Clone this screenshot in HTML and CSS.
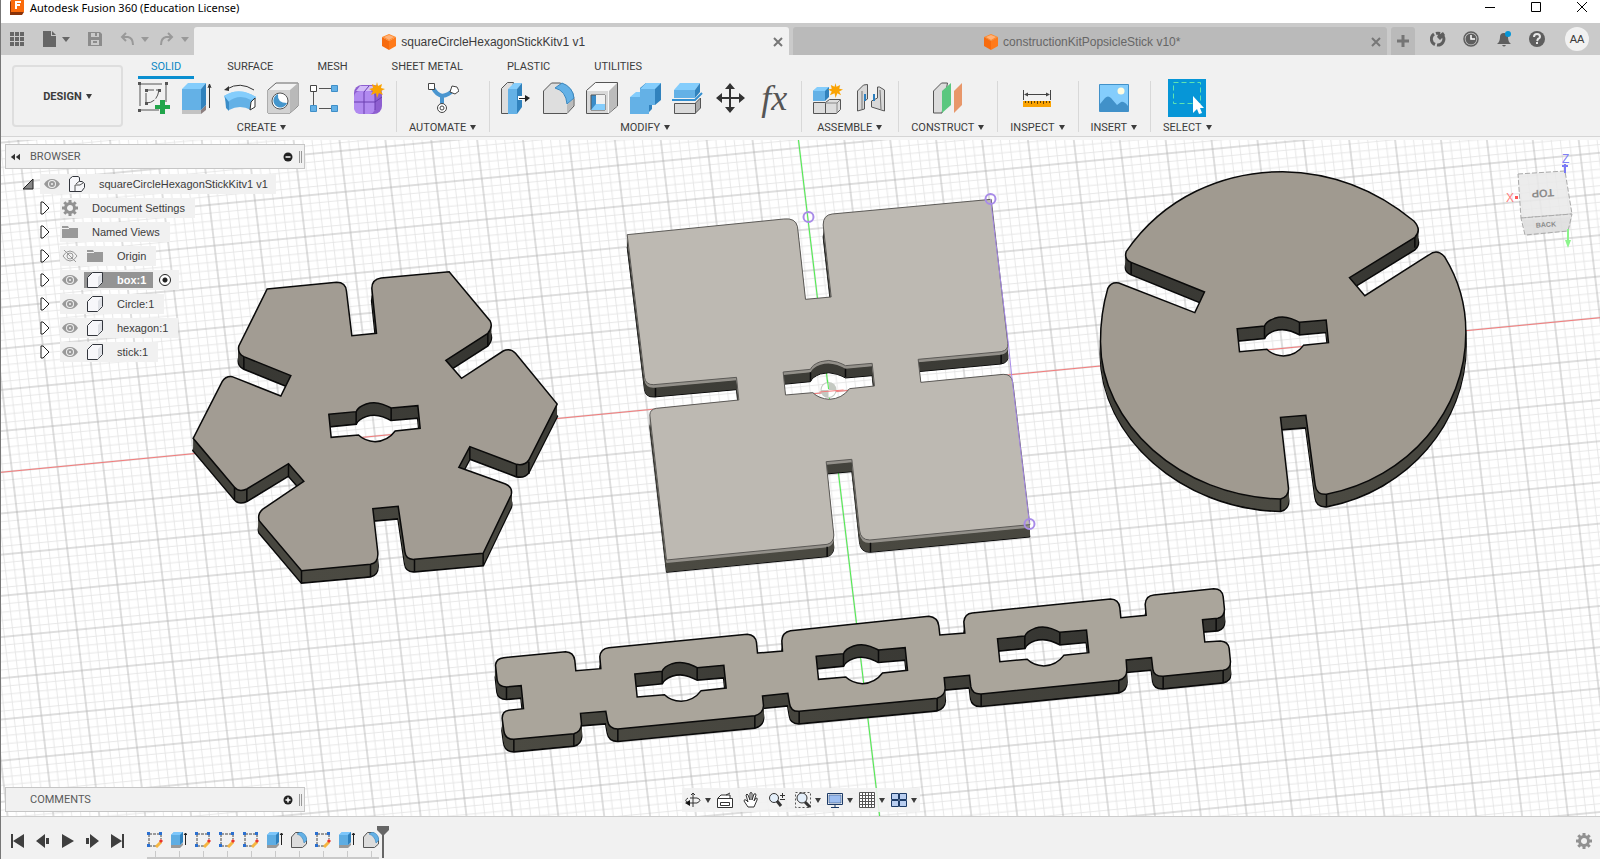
FILE: index.html
```html
<!DOCTYPE html>
<html lang="en">

<head>
    <meta charset="UTF-8">
    <meta name="viewport" content="width=device-width, initial-scale=1.0">
    <title>Autodesk Fusion 360 (Education License)</title>
    <link rel="stylesheet" href="styles.css">
</head>

<body>
    <!-- Shared icons -->
    <svg class="sprite" aria-hidden="true">
        <symbol id="cube" viewBox="0 0 16 16">
            <path fill="#ff8a2b" d="M8 0l7 3-7 4-7-4z" /><path fill="#f76b0e" d="M1 3l7 4v9l-7-4z" /><path fill="#ff7a1a" d="M15 3L8 7v9l7-4z" /><path fill="#ffb27a" d="M8 1l5 2-5 3-5-3z" />
        </symbol>
        <symbol id="eye" viewBox="0 0 16 16">
            <path fill="#999" d="M0 8Q3 3 8 3t8 5q-3 5-8 5T0 8z" /><circle cx="8" cy="8" r="4" fill="#f1f1f1" /><circle cx="8" cy="8" r="3" fill="#999" /><circle cx="8" cy="8" r="1" fill="#f1f1f1" />
        </symbol>
        <symbol id="eye-off" viewBox="0 0 16 16">
            <path fill="none" stroke="#999" d="M1 8q3-5 7-5t7 5q-3 5-7 5T1 8zM2 2l12 12" /><circle cx="8" cy="8" r="3" fill="none" stroke="#999" />
        </symbol>
        <symbol id="folder" viewBox="0 0 16 16"><path fill="#999" d="M0 2h6l1 2h9v10H0z" /><path stroke="#f1f1f1" d="M0 4.500h7" /></symbol>
        <symbol id="gear" viewBox="0 0 16 16">
            <circle cx="8" cy="8" r="4.500" fill="none" stroke="#919191" stroke-width="3" />
            <path stroke="#919191" stroke-width="3" d="M8 0v3M8 13v3M0 8h3M13 8h3M2.300 2.300l2 2M11.700 11.700l2 2M2.300 13.700l2-2M11.700 4.300l2-2" />
        </symbol>
        <symbol id="body" viewBox="0 0 16 16"><path fill="#f7f7fa" stroke="#33363d" d="M.500 5.500l5-5h10v10l-5 5H.500z" /><path fill="#dfe1e6" d="M11 5l4-4v9l-4 5z" /></symbol>
        <symbol id="assembly" viewBox="0 0 16 16"><path fill="#f7f7fa" stroke="#33363d" d="M.500 3l3-2.500H9l1.500 1v4H13l2.500 2v4l-3 4H.500z" /><path fill="none" stroke="#555" d="M6 9v6M6 9h5l3-2M10.500 5L7 8" /></symbol>
        <symbol id="closed" viewBox="0 0 10 14"><path fill="#fff" stroke="#222" d="M1 1v12h2l6-6-6-6z" /></symbol>
        <symbol id="sketch" viewBox="0 0 16 16">
            <path fill="none" stroke="#444" stroke-dasharray="3 1" d="M2 2h12v5M2 2v12h7" /><path fill="#2a6fd0" d="M0 0h3v3H0zM12 0h3v3h-3zM0 12h3v3H0z" /><path stroke="#f5b642" stroke-width="3" d="M9 15l5-5" /><path stroke="#e8352c" stroke-width="3" d="M13 10l2-2" />
        </symbol>
        <symbol id="extrude-s" viewBox="0 0 16 16">
            <path fill="#999" d="M0 13h9l3-2v2l-3 3H0z" /><path fill="#5eade3" d="M0 3l3-3h9v10l-3 3H0z" /><path fill="#7cc6fb" d="M0 3l3-3h9L9 3z" /><path fill="#2e80bd" d="M9 3l3-3v10l-3 3z" /><path stroke="#222" d="M14.500 13V1M13 3l1.500-2L16 3" />
        </symbol>
        <symbol id="fillet-s" viewBox="0 0 16 16">
            <path fill="#dcdcdc" stroke="#555" d="M.500 15.500V5l4-4.500h5Q15 3 15.500 9v3l-4 3.500z" /><path fill="#64b1e6" stroke="#2c78b0" stroke-width=".5" d="M6 2l3-2q6 1 7 8l-3 3Q12 4 6 2z" />
        </symbol>
        <symbol id="burst" viewBox="0 0 16 16"><path fill="#faa302" d="M8 0l1 4 4-2-1 4 4 1-4 2 2 4-4-2-2 5-1-5-5 2 2-4-4-2 4-1-1-4 4 2z" /></symbol>
    </svg>

    <!-- Title bar -->
    <header class="titlebar">
        <svg class="app-logo" viewBox="0 0 14 16"><path fill="#fa6b0c" d="M1 0h13v12H1z" /><path fill="#8a3208" d="M0 2l1-2v12h13l-2 3H0z" /><path fill="none" stroke="#fff" stroke-width="2" d="M6 9V2h5M6 5h4" /></svg>
        <h1>Autodesk Fusion 360 (Education License)</h1>
        <div class="window-controls">
            <button aria-label="Minimize"><svg viewBox="0 0 12 12"><path d="M1 6.500h10" /></svg></button>
            <button aria-label="Maximize"><svg viewBox="0 0 12 12"><path d="M1.500 1.500h9v9h-9z" /></svg></button>
            <button aria-label="Close"><svg viewBox="0 0 12 12"><path d="M1 1l10 10M11 1L1 11" /></svg></button>
        </div>
    </header>

    <!-- Document tabs -->
    <nav class="docbar">
        <div class="quick">
            <button aria-label="Data panel"><svg class="i14" viewBox="0 0 14 14"><path fill="#666" d="M0 0h4v4H0zM5 0h4v4H5zM10 0h4v4h-4zM0 5h4v4H0zM5 5h4v4H5zM10 5h4v4h-4zM0 10h4v4H0zM5 10h4v4H5zM10 10h4v4h-4z" /></svg></button>
            <button class="drop" aria-label="File"><svg class="i16" viewBox="0 0 16 16"><path fill="#666" d="M1 0h8v5h5v11H1zM10 0l4 4h-4z" /></svg></button>
            <button aria-label="Save"><svg class="i14" viewBox="0 0 14 14"><path fill="#8c8c8c" fill-rule="evenodd" d="M0 0h12l2 2v12H0zM3 1v4h8V1zM3 8v5h8V8z" /><path stroke="#8c8c8c" stroke-width="2" d="M8 1v3M5 10h4" /></svg></button>
            <button class="drop faded" aria-label="Undo"><svg class="i14" viewBox="0 0 14 14"><path fill="none" stroke="#999" stroke-width="2" d="M2 5h6q5 1 5 8" /><path fill="none" stroke="#999" stroke-width="2" d="M6 1L2 5l4 4" /></svg></button>
            <button class="drop faded" aria-label="Redo"><svg class="i14" viewBox="0 0 14 14"><path fill="none" stroke="#999" stroke-width="2" d="M12 5H6q-5 1-5 8" /><path fill="none" stroke="#999" stroke-width="2" d="M8 1l4 4-4 4" /></svg></button>
        </div>
        <div class="doc active">
            <a href="#"><svg class="i16"><use href="#cube" /></svg>squareCircleHexagonStickKitv1 v1</a>
            <button aria-label="Close tab"><svg viewBox="0 0 10 10"><path d="M1 1l8 8M9 1L1 9" /></svg></button>
        </div>
        <div class="doc">
            <a href="#"><svg class="i16"><use href="#cube" /></svg>constructionKitPopsicleStick v10*</a>
            <button aria-label="Close tab"><svg viewBox="0 0 10 10"><path d="M1 1l8 8M9 1L1 9" /></svg></button>
        </div>
        <button class="new-doc" aria-label="New design"><svg class="i14" viewBox="0 0 14 14"><path stroke="#757575" stroke-width="3" d="M7 1v12M1 7h12" /></svg></button>
        <div class="account">
            <button aria-label="Extensions"><svg class="i16" viewBox="0 0 16 16"><path fill="none" stroke="#5e5e5e" stroke-width="3" d="M4 3a6 6 0 0 0 1 10.500M7 14a6 6 0 0 0 6-9M6 2.500a6 6 0 0 1 4 0" /><path fill="#5e5e5e" d="M7 6l3 3 5-5-2-3-3 2-1-1z" /></svg></button>
            <button aria-label="Job status"><svg class="i16" viewBox="0 0 16 16"><circle cx="8" cy="8" r="7" fill="none" stroke="#5e5e5e" stroke-width="1.500" /><circle cx="8" cy="8" r="5.500" fill="#5e5e5e" /><path fill="none" stroke="#fff" stroke-width="1.500" d="M8 4v4h4" /></svg></button>
            <button aria-label="Notifications"><svg class="i16" viewBox="0 0 16 16"><path fill="#5e5e5e" d="M1 13q3-2 3-7 0-4 4-4t4 4q0 5 3 7zM6 14h4q-2 3-4 0z" /><circle cx="12" cy="3" r="3" fill="#0696d7" /></svg></button>
            <button aria-label="Help"><svg class="i16" viewBox="0 0 16 16"><circle cx="8" cy="8" r="8" fill="#5e5e5e" /><path fill="none" stroke="#e8e8e8" stroke-width="2" d="M5 6q0-3 3-3t3 3q0 1-2 2l-1 2M8 11v2" /></svg></button>
            <button class="avatar">AA</button>
        </div>
    </nav>

    <!-- Ribbon -->
    <section class="ribbon">
        <button class="workspace drop">DESIGN</button>
        <div class="tools">
            <nav class="tabs">
                <a class="active" href="#">SOLID</a>
                <a href="#">SURFACE</a>
                <a href="#">MESH</a>
                <a href="#">SHEET METAL</a>
                <a href="#">PLASTIC</a>
                <a href="#">UTILITIES</a>
            </nav>
            <div class="groups">
                <div class="group">
                    <div class="icons">
                        <button aria-label="Create Sketch"><svg viewBox="0 0 32 32"><path fill="none" stroke="#555" d="M2 2h26v18M2 2v26h19" stroke-dasharray="22 3" /><path fill="none" stroke="#555" d="M8 20V8h13M8 21q11 0 13-13" stroke-dasharray="9 2" /><path fill="#555" d="M0 0h3v3H0zM27 0h3v3h-3zM0 27h3v3H0zM7 7h3v3H7zM20 7h3v3h-3zM7 20h3v3H7z" /><path fill="#21a54a" d="M22 18h5v5h5v4h-5v5h-5v-5h-5v-4h5z" /></svg></button>
                        <button aria-label="Extrude"><svg viewBox="0 0 32 32"><path fill="#c3c3c3" d="M1 28h19v4H1z" /><path fill="#8e8080" d="M20 28l5-5v5l-5 4z" /><path fill="#64b1e6" d="M1 7h19v21H1z" /><path fill="#84cdfc" d="M1 7l6-6h18l-5 6z" /><path fill="#3182bd" d="M20 7l5-6v22l-5 5z" /><path fill="none" stroke="#333" d="M28.500 26V3M27 6l1.500-4L30 6" /></svg></button>
                        <button aria-label="Revolve"><svg viewBox="0 0 32 32"><path fill="#64b1e6" d="M0 14q15-9 32 1l-5 13q-11-6-22 0z" /><path fill="#84cdfc" d="M0 14q15-10 32 1l-5 3q-12-7-23 2z" /><path fill="#3b8dc8" d="M1 15l4 5v9l-3-3z" /><path fill="#fff" stroke="#333" d="M31 16l-4 4-1 8 5-3z" /><path fill="none" stroke="#333" d="M30 8Q16-1 3 7" /><path fill="#333" d="M0 8l5-4v5z" /></svg></button>
                        <button aria-label="Hole"><svg viewBox="0 0 32 32"><path fill="#f3f3f3" stroke="#666" d="M1 8l8-7h22v23l-8 7H1z" /><path fill="#d2d2d2" d="M1 8h22v23H1z" /><path fill="#b9b9b9" d="M23 8l8-7v23l-8 7z" /><circle cx="13" cy="19" r="8" fill="#fff" stroke="#555" /><path fill="#4596cc" d="M11 12a7 7 0 1 0 9 9q-10 0-9-9z" /></svg></button>
                        <button aria-label="Pattern"><svg viewBox="0 0 32 32"><path stroke="#555" d="M9 6.500h12M3.500 10v16M9 26.500h12" /><path fill="#fff" stroke="#444" d="M.500 3.500h6v6h-6z" /><path fill="#64b1e6" stroke="#3f8fc8" d="M21.500 3.500h6v6h-6zM.500 23.500h6v6h-6zM21.500 23.500h6v6h-6z" /></svg></button>
                        <button aria-label="Create Form"><svg viewBox="0 0 32 32"><rect x="1" y="3" width="28" height="29" rx="8" fill="#8e5fd0" /><rect x="1" y="9" width="21" height="23" rx="6" fill="#b18af0" /><path fill="#d3bcf8" d="M7 4h15l-4 5H3z" /><path fill="none" stroke="#6a3fb0" d="M11 10v22M1 20h21l7-5M11 10l5-6M22 12v16" /><use href="#burst" x="16" y="0" width="16" height="16" /></svg></button>
                    </div>
                    <button class="label drop">CREATE</button>
                </div>
                <div class="group">
                    <div class="icons">
                        <button aria-label="Automated Modeling"><svg viewBox="0 0 32 32"><path fill="none" stroke="#4a96d0" stroke-width="4" d="M6 6q3 6 9 8 7-1 11-6M15 14v10" /><path fill="#fff" stroke="#444" d="M1.500 1.500h6v6h-6zM25 4l5 1 2 4-4 3-5-2z" /><circle cx="15" cy="26" r="4.500" fill="#fff" stroke="#444" /><circle cx="15" cy="26" r="2" fill="none" stroke="#444" /></svg></button>
                    </div>
                    <button class="label drop">AUTOMATE</button>
                </div>
                <div class="group">
                    <div class="icons">
                        <button aria-label="Press Pull"><svg viewBox="0 0 32 32"><path fill="#dedede" stroke="#555" d="M1.500 31.500v-25l6-6h6l-5 31z" /><path fill="#64b1e6" d="M8 7h9v25H8z" /><path fill="#84cdfc" d="M8 7l6-6h8l-5 6z" /><path fill="#3182bd" d="M17 7l5-6v24l-5 7z" /><path stroke="#fff" stroke-width="4" d="M18 16h6" /><path stroke="#222" d="M19 16.500h7" /><path fill="#222" d="M25 13l5 3-5 4z" /></svg></button>
                        <button aria-label="Fillet"><svg viewBox="0 0 32 32"><path fill="#dedede" stroke="#555" d="M.500 31.500V9l8-8H17q13 4 14 16v7l-7 7.500z" /><path fill="#bbb" d="M24 23l6-6v7l-6 7z" /><path fill="#64b1e6" stroke="#3a88c0" d="M12 6l7-5q11 4 12 15l-7 6Q23 9 12 6z" /></svg></button>
                        <button aria-label="Shell"><svg viewBox="0 0 32 32"><path fill="#f8f8f8" stroke="#555" d="M.500 8.500l9-8h22V24l-9 7.500H.500z" /><path fill="#d9d9d9" d="M1 9h21v22H1z" /><path fill="#bcbcbc" d="M23 9l8-8v23l-8 7z" /><path fill="#3a8cc8" stroke="#555" d="M5 13h14v15H5z" /><path fill="#f1f1f1" d="M10 13h9v9h-9z" /><path fill="#84cdfc" d="M5 28l5-6h9v6z" /></svg></button>
                        <button aria-label="Combine"><svg viewBox="0 0 32 32"><path fill="#3182bd" d="M1 16l6-5h4V6l6-5h15v17l-6 5h-3v4l-5 5H1z" /><path fill="#64b1e6" d="M1 15h10V7h15v16h-6v9H1z" /><path fill="#84cdfc" d="M11 7l6-6h15l-6 6zM1 15l6-5h4v5z" /></svg></button>
                        <button aria-label="Split Body"><svg viewBox="0 0 32 32"><path fill="#64b1e6" d="M2 8h21v8H2z" /><path fill="#84cdfc" d="M2 8l6-7h20l-5 7z" /><path fill="#3182bd" d="M23 8l5-7v9l-5 6z" /><path fill="none" stroke="#338fd0" stroke-width="2" d="M0 18h23l7-7" /><path fill="#dadada" stroke="#555" d="M2.500 21.500h21v10h-21z" /><path fill="#aaa" stroke="#555" d="M23.500 21l5-5v10l-5 5z" /></svg></button>
                        <button aria-label="Move"><svg viewBox="0 0 32 32"><path stroke="#333" stroke-width="2" d="M15 5v22M4 16h22" /><path fill="#333" d="M15 1l5 6H10zM15 31l5-6H10zM1 16l6-5v10zM30 16l-6-5v10z" /></svg></button>
                        <button class="fx" aria-label="Change Parameters"><i>fx</i></button>
                    </div>
                    <button class="label drop">MODIFY</button>
                </div>
                <div class="group">
                    <div class="icons">
                        <button aria-label="New Component"><svg viewBox="0 0 32 32"><path fill="#3182bd" d="M1 9l5-4h11v10l-4 4H1z" /><path fill="#64b1e6" d="M1 9h12v10H1z" /><path fill="#84cdfc" d="M1 9l4-4h12l-4 4z" /><path fill="#ddd" stroke="#555" d="M1.500 20.500h12v11h-12zM13.500 20.500l4-3h11v10l-4 4h-11z" /><path fill="none" stroke="#888" d="M13 21h12v10M25 21l3-3" /><use href="#burst" x="16" y="1" width="15" height="15" /></svg></button>
                        <button aria-label="Joint"><svg viewBox="0 0 32 32"><path fill="#d8d8d8" stroke="#555" d="M2.500 29V9l6-6 4-.500V17l-3 2v8zM29.500 29V8l-5-3h-2v11l-6 3v6z" /><path fill="none" stroke="#777" d="M7 9v18M25 8l1 19" /><path stroke="#2c80c0" stroke-width="2" d="M10 12v7M19 12v7" /></svg></button>
                    </div>
                    <button class="label drop">ASSEMBLE</button>
                </div>
                <div class="group">
                    <div class="icons">
                        <button aria-label="Offset Plane"><svg viewBox="0 0 32 32"><path fill="#dcdcdc" stroke="#555" d="M1.500 31V9l8-8h6L10 31z" /><path fill="#5bc77f" d="M10 9l9-8v22l-9 8z" /><path fill="#e8976a" d="M22 9l8-8v22l-8 8z" /></svg></button>
                    </div>
                    <button class="label drop">CONSTRUCT</button>
                </div>
                <div class="group">
                    <div class="icons">
                        <button aria-label="Measure"><svg viewBox="0 0 32 32"><path stroke="#444" d="M2.500 8v10M29.500 8v10M4 12.500h24" /><path fill="#444" d="M3 12.500l4-2v4zM29 12.500l-4-2v4z" /><path fill="#faa302" d="M2 19h28v6H2z" /><path stroke="#664200" d="M4.500 19v2M7.500 19v2M10.500 19v3M13.500 19v2M16.500 19v3M19.500 19v2M22.500 19v3M25.500 19v2M28.500 19v2" /></svg></button>
                    </div>
                    <button class="label drop">INSPECT</button>
                </div>
                <div class="group">
                    <div class="icons">
                        <button aria-label="Insert Image"><svg viewBox="0 0 32 32"><path fill="#84cdfc" stroke="#4191c9" d="M1.500 2.500h29v27h-29z" /><path fill="#4191c9" d="M2 22l5-6q3-3 6 0l6 7 4-3q3-1 7 4v6H2z" /><circle cx="23" cy="9" r="3.500" fill="#fffce0" /></svg></button>
                    </div>
                    <button class="label drop">INSERT</button>
                </div>
                <div class="group">
                    <div class="icons">
                        <button class="selected" aria-label="Select"><svg viewBox="0 0 38 38"><path fill="none" stroke="#5fe3b0" stroke-dasharray="5 3" d="M5.500 3.500h27v21h-27z" /><path fill="#fff" d="M25 17v17l4-4 2 5 3-1-2-5h4z" /></svg></button>
                    </div>
                    <button class="label drop">SELECT</button>
                </div>
            </div>
        </div>
    </section>

    <!-- Modeling canvas -->
    <main class="stage">
        <svg class="scene" viewBox="0 137 1600 679" preserveAspectRatio="xMidYMid slice">
            <defs>
                <!-- ten units are one small grid cell, sheared into the view plane -->
                <pattern id="grid" width="50" height="50" patternUnits="userSpaceOnUse" patternTransform="matrix(.9074 -.0878 .0978 .8146 828.200 392.200)">
                    <path class="minor" d="M10 0v50M20 0v50M30 0v50M40 0v50M0 10h50M0 20h50M0 30h50M0 40h50" />
                    <path class="major" d="M0 0v50M50 0v50M0 0h50M0 50h50" />
                </pattern>
                <linearGradient id="wall" x1="0" x2="0" y1="0" y2="1">
                    <stop offset="0" stop-color="#30302d" />
                    <stop offset="1" stop-color="#4b4a42" />
                </linearGradient>
            </defs>
            <rect x="-400" y="-263" width="2400" height="1480" fill="url(#grid)" />
            <path class="axis-x" d="M-400 511L2000 279" />
            <path class="axis-y" d="M762 -160L929 1232" />
            <circle cx="828" cy="390" r="8" fill="#c4c9c2" />
            <path fill="#fff" d="M828 390h7a7 7 0 0 1-7 7zM828 390h-7a7 7 0 0 1 7-7z" />
            <path class="axis-x" d="M819 392l24-2" /><path class="axis-y" d="M827 380l1 9" />

            <!-- hexagon -->
            <g class="part" fill="#a29c93" data-depth="37" transform="translate(180 250) scale(.33333)">
                <path d="M260 117L468 97Q496 97 498 124L514 257L588 250L574 115Q574 88 602 84L806 65L929 213Q938 230 922 250L796 331L843 385L968 303Q990 293 1005 310L1130 462L1045 630Q1033 648 1008 643L868 590L835 652L975 702Q998 712 992 735L908 910L702 928Q676 930 673 905L653 769L577 776L592 908Q594 938 570 943L363 962L236 812Q230 793 246 778L370 694L324 641L199 717Q175 728 162 712L38 565L125 395Q135 378 155 380L301 438L331 377L190 320Q170 310 175 288z
                    M445 493l82-8q5-14 30-23q25-8 50 1q17 6 25 11l80-7l7 68l-75 8q-22 30-60 32q-32-2-50-20l-82 7z" />
                <path class="edge" d="M190 320v37M162 712v37M199 717v37M363 962v37M570 943v37M702 928v37M908 910v37M1008 643v37M1045 635v37M868 590v37M324 641v37M922 250v37M527 485v37M632 474v37" />
            </g>

            <!-- box -->
            <g class="part box" fill="#bdb9b2" data-depth="37" data-rim="9" transform="translate(610 180) scale(.33333)">
                <path d="M50 164L520 117Q555 113 561 140L585 358L662 351L638 135Q638 105 665 102L1142 58L1192 490Q1195 510 1172 515L923 538L931 607L1178 583Q1204 582 1207 608L1258 1034L778 1080Q750 1080 747 1050L724 838L647 845L670 1065Q670 1088 650 1093L168 1140L118 705Q118 688 138 685L385 660L378 592L130 614Q105 615 102 592z
                    M518 576l82-8q5-14 30-23q25-8 50 1q17 6 25 11l80-7l7 68l-75 8q-22 30-60 32q-32-2-50-20l-82 7z" />
                <path class="edge" d="M135 624v28M650 1100v30M780 1088v28M1172 524v28M600 577v25M705 566v25" />
            </g>
            <g class="picked">
                <path d="M990 199L1008 345L1011 374L1029 524" />
                <circle cx="808" cy="217" r="5" /><circle cx="990" cy="199" r="5" /><circle cx="1029" cy="524" r="5" />
            </g>

            <!-- circle -->
            <g class="part" fill="#a09a90" data-depth="37" transform="translate(1080 160) scale(.33333)">
                <path d="M137 275C250 110 430 35 607 35C770 38 900 100 1000 183Q1025 210 1003 232L807 353L853 407L1045 285Q1070 265 1092 290C1135 360 1157 440 1156 520C1156 750 985 955 738 1003Q708 1005 704 975L676 766L600 772L624 985Q625 1010 600 1017C300 1010 60 790 60 545Q60 460 82 385Q92 365 115 369L343 458L372 396L152 307Q130 298 137 275z
                    M470 506l82-8q5-14 30-23q25-8 50 1q17 6 25 11l80-7l7 68l-75 8q-22 30-60 32q-32-2-50-20l-82 7z" />
                <path class="edge" d="M152 307v37M600 1017v37M738 1003v37M1003 226v37M552 498v37M657 487v37" />
            </g>

            <!-- stick -->
            <g class="part" fill="#aaa59b" data-depth="37" transform="translate(480 570) scale(.33333)">
                <path d="M45 285Q47 265 70 263L255 245Q280 246 283 272L286 302L361 296L358 260Q360 236 385 233L800 193Q825 195 828 218L831 249L906 243L904 212Q905 187 930 182L1345 139Q1372 142 1375 168L1378 195L1453 189L1450 155Q1453 131 1475 129L1890 87Q1915 88 1918 113L1921 143L1997 136L1994 103Q1996 77 2020 75L2200 56Q2225 56 2228 80L2232 118Q2232 140 2212 145L2166 149L2173 216L2220 213Q2243 215 2246 235L2250 275Q2250 297 2228 301L2048 319Q2020 320 2017 297L2013 263L1937 270L1939 300Q1939 325 1915 331L1502 372Q1475 373 1471 350L1467 316L1391 323L1394 355Q1393 378 1370 385L956 424Q930 425 927 400L922 370L846 378L849 407Q848 430 823 437L412 477Q385 477 381 452L376 424L300 430L303 462Q302 485 280 491L100 508Q73 508 70 482L65 445Q65 424 85 421L129 416L122 347L78 351Q53 350 50 330z
                    M463 312l82-8q5-14 30-23q25-8 50 1q17 6 25 11l80-7l7 68l-75 8q-22 30-60 32q-32-2-50-20l-82 7z
                    M1007 259l82-8q5-14 30-23q25-8 50 1q17 6 25 11l80-7l7 68l-75 8q-22 30-60 32q-32-2-50-20l-82 7z
                    M1551 206l82-8q5-14 30-23q25-8 50 1q17 6 25 11l80-7l7 68l-75 8q-22 30-60 32q-32-2-50-20l-82 7z" />
                <path class="edge" d="M78 351v37M100 508v37M280 491v37M412 477v37M823 437v37M956 424v37M1370 385v37M1502 372v37M1915 331v37M2048 319v37M2228 301v37M2207 145v37M545 304v37M650 293v37M1089 251v37M1194 240v37M1633 198v37M1738 187v37" />
            </g>
        </svg>

        <!-- Browser tree -->
        <section class="panel browser">
            <header class="panel-head">
                <button aria-label="Collapse"><svg viewBox="0 0 12 10"><path fill="#333" d="M6 1v8L1 5zM12 1v8L7 5z" /></svg></button>
                <h2>BROWSER</h2>
                <button aria-label="Hide"><svg viewBox="0 0 10 10"><circle cx="5" cy="5" r="4.500" fill="#222" /><path stroke="#fff" stroke-width="1.500" d="M2.500 5h5" /></svg></button>
                <span class="grip"></span>
            </header>
            <ul class="tree">
                <li class="root"><svg class="arrow" viewBox="0 0 12 12"><path fill="#888" stroke="#222" d="M11 1v10H1z" /></svg><span class="node"><svg class="i16"><use href="#eye" /></svg><svg class="i16"><use href="#assembly" /></svg><span>squareCircleHexagonStickKitv1 v1</span></span></li>
                <li><svg class="arrow"><use href="#closed" /></svg><span class="node"><svg class="i16"><use href="#gear" /></svg><span>Document Settings</span></span></li>
                <li><svg class="arrow"><use href="#closed" /></svg><span class="node"><svg class="i16"><use href="#folder" /></svg><span>Named Views</span></span></li>
                <li><svg class="arrow"><use href="#closed" /></svg><span class="node"><svg class="i16"><use href="#eye-off" /></svg><svg class="i16"><use href="#folder" /></svg><span>Origin</span></span></li>
                <li><svg class="arrow"><use href="#closed" /></svg><span class="node current"><svg class="i16"><use href="#eye" /></svg><span class="name"><svg class="i16"><use href="#body" /></svg><span>box:1</span></span><input type="radio" checked aria-label="Activate box:1"></span></li>
                <li><svg class="arrow"><use href="#closed" /></svg><span class="node"><svg class="i16"><use href="#eye" /></svg><svg class="i16"><use href="#body" /></svg><span>Circle:1</span></span></li>
                <li><svg class="arrow"><use href="#closed" /></svg><span class="node"><svg class="i16"><use href="#eye" /></svg><svg class="i16"><use href="#body" /></svg><span>hexagon:1</span></span></li>
                <li><svg class="arrow"><use href="#closed" /></svg><span class="node"><svg class="i16"><use href="#eye" /></svg><svg class="i16"><use href="#body" /></svg><span>stick:1</span></span></li>
            </ul>
        </section>

        <!-- View cube -->
        <svg class="viewcube" viewBox="0 -4 80 104">
            <path fill="#9a9a9a" opacity=".3" d="M17 65l49-3-3 14-42 5z" />
            <path fill="#e9e9e9" fill-opacity=".85" stroke="#aaa" stroke-dasharray="5 2" d="M12 19l47-3 7 43-51 4z" />
            <path fill="#e0e0e0" fill-opacity=".85" stroke="#aaa" stroke-dasharray="5 2" d="M15 63l51-4-4 17-43 4z" />
            <text x="-34" y="-37" transform="rotate(176)" fill="#8c8c8c" font-size="11" font-weight="bold" text-anchor="middle">TOP</text>
            <text x="40" y="72" transform="rotate(-4 40 70)" fill="#8c8c8c" font-size="7" font-weight="bold" text-anchor="middle">BACK</text>
            <text x="0" y="47" fill="#ff8080" font-size="12">X</text>
            <path fill="#f55" d="M9 41h3v3H9z" />
            <text x="56" y="8" fill="#8080f5" font-size="12">Z</text>
            <path stroke="#7a7af5" stroke-width="2" d="M59 9v9M56 11h6" />
            <path stroke="#8cf58c" stroke-width="2" d="M62 74v16" /><path fill="#8cf58c" d="M59 85h6l-3 8z" />
        </svg>

        <!-- Comments -->
        <section class="panel comments">
            <header class="panel-head">
                <h2>COMMENTS</h2>
                <button aria-label="Add comment"><svg viewBox="0 0 10 10"><circle cx="5" cy="5" r="4.500" fill="#222" /><path stroke="#fff" stroke-width="1.500" d="M2.500 5h5M5 2.500v5" /></svg></button>
                <span class="grip"></span>
            </header>
        </section>

        <!-- Navigation bar -->
        <div class="navbar">
            <button class="drop" aria-label="Orbit"><svg class="i16" viewBox="0 0 16 16"><path fill="none" stroke="#333" d="M8 1v14M6 3l2-2 2 2M3 6q-5 3 1 5h8q6-3 0-5H5" /><path fill="#111" d="M0 11l5-3v6z" /></svg></button>
            <button aria-label="Look at"><svg class="i16" viewBox="0 0 16 16"><path fill="#fff" stroke="#333" d="M.500 6.500h15v9H.500zM3.500 10.500h9v3h-9zM1 6l3-3h9v3M9 3l4-2" /></svg></button>
            <button aria-label="Pan"><svg class="i16" viewBox="0 0 16 16"><path fill="#fff" stroke="#333" d="M5 15L1 9q0-2 2-1l2 2-2-7q1-2 2 0l2 5V1q1-1 2 0v7l2-6q2-1 2 1l-2 6 2-3q2 0 1 2l-3 7z" /></svg></button>
            <button aria-label="Zoom"><svg class="i16" viewBox="0 0 16 16"><circle cx="5" cy="6" r="4.500" fill="#e4effa" stroke="#333" /><path stroke="#333" stroke-width="3" d="M8 9l4 5" /><path stroke="#333" d="M11 3.500h5M13.500 1v5M11 7.500h5" /></svg></button>
            <button class="drop" aria-label="Fit"><svg class="i16" viewBox="0 0 16 16"><path fill="none" stroke="#555" stroke-dasharray="2 2" d="M.500.500h15v15H.500z" /><circle cx="7" cy="6" r="5" fill="#e4effa" stroke="#333" /><path stroke="#333" stroke-width="3" d="M10 10l5 5" /></svg></button>
            <button class="drop" aria-label="Display Settings"><svg class="i16" viewBox="0 0 16 16"><path fill="#eef3fa" stroke="#1c3a66" d="M.500 1.500h15v11H.500zM4 15.500h8M8 12v3" /><path fill="#9cbdf0" stroke="#1c3a66" stroke-width=".5" d="M2 3h12v8H2z" /></svg></button>
            <button class="drop" aria-label="Grid and Snaps"><svg class="i16" viewBox="0 0 16 16"><path fill="#fff" stroke="#555" d="M.500.500h15v15H.500zM3.500 0v16M6.500 0v16M9.500 0v16M12.500 0v16M0 3.500h16M0 6.500h16M0 9.500h16M0 12.500h16" /></svg></button>
            <button class="drop" aria-label="Viewports"><svg class="i16" viewBox="0 0 16 16"><path fill="#b9cef0" stroke="#1c3a66" d="M.500 1.500h7v6h-7zM8.500 1.500h7v6h-7zM.500 8.500h7v6h-7zM8.500 8.500h7v6h-7z" /></svg></button>
        </div>
    </main>

    <!-- Timeline -->
    <footer class="timeline">
        <div class="playback">
            <button aria-label="Go to start"><svg viewBox="0 0 13 14"><path d="M0 0h2v14H0zM13 0v14L2 7z" /></svg></button>
            <button aria-label="Step back"><svg viewBox="0 0 13 14"><path d="M9 0v14L0 7zM10 4h3v6h-3z" /></svg></button>
            <button aria-label="Play"><svg viewBox="0 0 13 14"><path d="M1 0v14l12-7z" /></svg></button>
            <button aria-label="Step forward"><svg viewBox="0 0 13 14"><path d="M4 0v14l9-7zM0 4h3v6H0z" /></svg></button>
            <button aria-label="Go to end"><svg viewBox="0 0 13 14"><path d="M11 0h2v14h-2zM0 0v14l11-7z" /></svg></button>
        </div>
        <div class="history">
            <button aria-label="Sketch1"><svg class="i16"><use href="#sketch" /></svg></button>
            <button aria-label="Extrude1"><svg class="i16"><use href="#extrude-s" /></svg></button>
            <button aria-label="Sketch2"><svg class="i16"><use href="#sketch" /></svg></button>
            <button aria-label="Sketch3"><svg class="i16"><use href="#sketch" /></svg></button>
            <button aria-label="Sketch4"><svg class="i16"><use href="#sketch" /></svg></button>
            <button aria-label="Extrude2"><svg class="i16"><use href="#extrude-s" /></svg></button>
            <button aria-label="Fillet1"><svg class="i16"><use href="#fillet-s" /></svg></button>
            <button aria-label="Sketch5"><svg class="i16"><use href="#sketch" /></svg></button>
            <button aria-label="Extrude3"><svg class="i16"><use href="#extrude-s" /></svg></button>
            <button aria-label="Fillet2"><svg class="i16"><use href="#fillet-s" /></svg></button>
            <svg class="marker" viewBox="0 0 12 32"><path fill="#666" d="M0 0h12v4L7 9v23H5V9L0 4z" /></svg>
        </div>
        <button class="settings" aria-label="Timeline settings"><svg class="i16"><use href="#gear" /></svg></button>
    </footer>

    <script>
        // Extrude each part downwards: stack copies of its face, deepest first
        document.querySelectorAll('.part').forEach(part => {
            const face = part.querySelector('path');
            const depth = Number(part.dataset.depth);
            const rim = Number(part.dataset.rim || 0);
            for (let dy = depth; dy > 0; dy -= 2) {
                const layer = face.cloneNode();
                layer.setAttribute('transform', `translate(0 ${dy})`);
                layer.setAttribute('class', dy === depth ? 'base' : dy <= rim ? 'rim' : 'wall');
                part.insertBefore(layer, face);
            }
            // vertical edges sit behind the face
            part.insertBefore(part.querySelector('.edge'), face);
            face.setAttribute('class', 'face');
        });
    </script>
</body>

</html>
```
FILE: styles.css
```css
* {
    box-sizing: border-box;
}

body {
    display: flex;
    flex-direction: column;
    height: 100vh;
    margin: 0;
    overflow: hidden;
    border-left: 1px solid #777;
    background: #f1f1f1;
    color: #3c3c3c;
    font-family: "Liberation Sans", Arial, sans-serif;
    font-size: 11px;
}

button {
    display: flex;
    align-items: center;
    justify-content: center;
    padding: 0;
    border: none;
    background: none;
    color: inherit;
    font: inherit;
}

a {
    color: inherit;
    text-decoration: none;
}

h1,
h2 {
    margin: 0;
    font-weight: normal;
}

svg {
    display: block;
    flex: none;
}

.sprite {
    position: absolute;
    width: 0;
    height: 0;
}

.i14 {
    width: 14px;
    height: 14px;
}

.i16 {
    width: 16px;
    height: 16px;
}

/* small triangle after drop-down buttons */
.drop::after {
    content: "";
    margin-left: 4px;
    border: 3px solid transparent;
    border-top: 5px solid #3c3c3c;
    border-bottom: 0;
}

/* Title bar */
.titlebar {
    display: flex;
    align-items: flex-start;
    height: 23px;
    background: #fff;
    color: #000;
}

.app-logo {
    width: 14px;
    height: 16px;
    margin-left: 9px;
}

.titlebar h1 {
    flex: 1;
    margin-left: 6px;
    font-family: "Noto Sans", "Open Sans", sans-serif;
    font-size: 11px;
    line-height: 16px;
}

.window-controls {
    display: flex;
    gap: 34px;
    padding: 1px 12px 0 0;
}

.window-controls svg {
    width: 12px;
    height: 12px;
    fill: none;
    stroke: #000;
}

/* Document tabs */
.docbar {
    display: flex;
    align-items: flex-end;
    height: 32px;
    background: #cacaca;
}

.quick {
    display: flex;
    align-items: center;
    gap: 18px;
    width: 193px;
    height: 32px;
    padding-left: 9px;
}

.quick .drop::after {
    border-top-color: #666;
    border-width: 5px 4px 0;
}

.quick .faded::after {
    margin-left: 7px;
    border-top-color: #999;
}

.quick .faded + .faded {
    margin-left: -7px;
}

.doc {
    display: flex;
    flex: 1;
    align-items: center;
    height: 28px;
    margin-right: 4px;
    padding: 1px 6px 0 0;
    border-radius: 3px 3px 0 0;
    background: #bababa;
    color: #666;
    font-size: 12px;
}

.doc.active {
    background: #f1f1f1;
    color: #3c3c3c;
}

.doc a {
    display: flex;
    flex: 1;
    align-items: center;
    justify-content: center;
    gap: 4px;
}

.doc button svg {
    width: 10px;
    height: 10px;
    stroke: #777;
    stroke-width: 2;
}

.new-doc {
    width: 24px;
    height: 28px;
    border-radius: 3px 3px 0 0;
    background: #bababa;
}

.account {
    display: flex;
    align-items: center;
    gap: 17px;
    height: 32px;
    padding: 0 11px 0 15px;
}

.avatar {
    width: 24px;
    height: 24px;
    margin-left: 3px;
    border-radius: 50%;
    background: #f1f1f1;
}

/* Ribbon */
.ribbon {
    position: relative;
    z-index: 1;
    display: flex;
    height: 82px;
    border-bottom: 1px solid #d5d5d5;
    background: #f1f1f1;
    box-shadow: 0 3px #f6f6f6;
    font-family: Roboto, sans-serif;
}

.workspace {
    width: 111px;
    height: 62px;
    margin: 10px 4px 0 11px;
    border: 2px solid #dedede;
    border-radius: 4px;
    font-weight: bold;
}

.tabs {
    display: flex;
    height: 24px;
}

.tabs a {
    position: relative;
    padding: 0 22px;
    line-height: 24px;
}

.tabs .active {
    padding: 0 24px;
    color: #0a87c4;
}

.tabs .active::after {
    content: "";
    position: absolute;
    right: 11px;
    bottom: 0;
    left: 11px;
    height: 3px;
    background: #0a8fd0;
}

.groups {
    display: flex;
}

.group {
    position: relative;
    display: flex;
    flex-direction: column;
    align-items: center;
    padding: 0 11px;
}

.group + .group::before {
    content: "";
    position: absolute;
    top: 2px;
    left: 0;
    width: 1px;
    height: 51px;
    background: #d8d8d8;
}

.icons {
    display: flex;
    align-items: center;
    gap: 11px;
    height: 38px;
}

.icons svg {
    width: 32px;
    height: 32px;
}

.icons .selected {
    background: #0696d7;
}

.icons .selected svg {
    width: 38px;
    height: 38px;
}

.fx {
    width: 32px;
    height: 32px;
    color: #555;
    font-family: "Liberation Serif", serif;
    font-size: 36px;
    line-height: 32px;
}

.label {
    height: 20px;
    padding: 0 2px;
}

/* Canvas */
.stage {
    position: relative;
    flex: 1;
    min-height: 0;
    background: #fff;
}

.scene {
    position: absolute;
    width: 100%;
    height: 100%;
}

.minor {
    fill: none;
    stroke: #e4e4e4;
}

.major {
    fill: none;
    stroke: #b4b4b4;
}

.axis-x {
    stroke: #f57c7c;
}

.axis-y {
    stroke: #4cf04c;
}

.part path {
    fill-rule: evenodd;
    vector-effect: non-scaling-stroke;
}

.part .face,
.part .base,
.part .edge {
    stroke: #0a0a0a;
    stroke-width: 1.5;
}

.part .base {
    stroke-width: 2;
}

.part .base,
.part .wall {
    fill: url(#wall);
}

.part .rim {
    fill: #94918b;
}

.part.box .base,
.part.box .face {
    stroke-width: 1;
}

.part.box .face {
    stroke: #5c5a57;
}

.picked {
    fill: none;
    stroke: #a88be8;
}

.picked circle {
    stroke-width: 2;
}

.viewcube {
    position: absolute;
    top: 14px;
    right: 14px;
    width: 80px;
    height: 104px;
}

/* Panels */
.panel {
    position: absolute;
    left: 4px;
    width: 300px;
}

.browser {
    top: 7px;
}

.comments {
    bottom: 4px;
}

.panel-head {
    display: flex;
    align-items: center;
    height: 25px;
    padding: 0 2px 0 4px;
    border: 1px solid #c6c6c6;
    background: #f1f1f1;
    color: #5a5a5a;
    font-family: Roboto, sans-serif;
}

.panel-head svg {
    width: 10px;
    height: 10px;
}

.panel-head h2 {
    flex: 1;
    margin-left: 10px;
    font-size: 11px;
}

.comments h2 {
    margin-left: 20px;
}

.grip {
    width: 3px;
    height: 12px;
    margin-left: 6px;
    border: 1px solid #999;
    border-width: 0 1px;
}

.tree {
    margin: 3px 0 0;
    padding: 0;
    list-style: none;
}

.tree li {
    display: flex;
    align-items: center;
    height: 24px;
    padding-left: 35px;
}

.tree .root {
    padding-left: 17px;
}

.arrow {
    width: 10px;
    height: 14px;
    margin-right: 10px;
}

.root .arrow {
    width: 12px;
    margin-right: 6px;
}

.node {
    display: flex;
    align-items: center;
    gap: 9px;
    height: 20px;
    padding: 0 10px 0 2px;
    background: #f1f1f1;
}

.root .node {
    padding: 0 8px 0 4px;
}

.node > span,
.name > span {
    margin-left: 5px;
}

.current {
    gap: 6px;
    padding-right: 8px;
}

.current .name {
    display: flex;
    align-items: center;
    gap: 9px;
    height: 16px;
    margin-left: 0;
    padding: 0 7px 0 3px;
    background: #949494;
    color: #fff;
    font-weight: bold;
}

.current input {
    width: 12px;
    height: 12px;
    margin: 0;
    border: 1px solid #222;
    border-radius: 50%;
    background: radial-gradient(#222 2px, #fff 3px);
    appearance: none;
}

/* Navigation bar */
.navbar {
    position: absolute;
    right: 0;
    bottom: 4px;
    left: 0;
    display: flex;
    gap: 10px;
    width: fit-content;
    margin: 0 auto;
    padding: 4px 3px;
    background: rgba(241, 241, 241, .9);
}

.navbar .drop {
    margin-right: -4px;
}

.navbar .drop:last-child {
    margin-right: 0;
}

.navbar .drop::after {
    margin-left: 4px;
}

/* Timeline */
.timeline {
    display: flex;
    align-items: flex-start;
    height: 43px;
    border-top: 1px solid #cdcdcd;
}

.playback {
    display: flex;
    gap: 12px;
    padding: 17px 0 0 10px;
}

.playback svg {
    width: 13px;
    height: 14px;
    fill: #3f3f3f;
}

.history {
    position: relative;
    display: flex;
    margin-left: 23px;
    border-bottom: 2px solid #c9c9c9;
}

.history button {
    align-items: flex-start;
    width: 24px;
    height: 40px;
    padding: 15px 8px 0 0;
    background: linear-gradient(#c9c9c9, #c9c9c9) 8px 34px / 1px 6px no-repeat;
}

.history button:last-of-type {
    width: 16px;
    padding-right: 0;
}

.marker {
    position: absolute;
    top: 9px;
    right: -18px;
    width: 12px;
    height: 32px;
}

.history button:last-of-type + .marker {
    right: -10px;
}

.settings {
    margin: 16px 8px 0 auto;
}
```
